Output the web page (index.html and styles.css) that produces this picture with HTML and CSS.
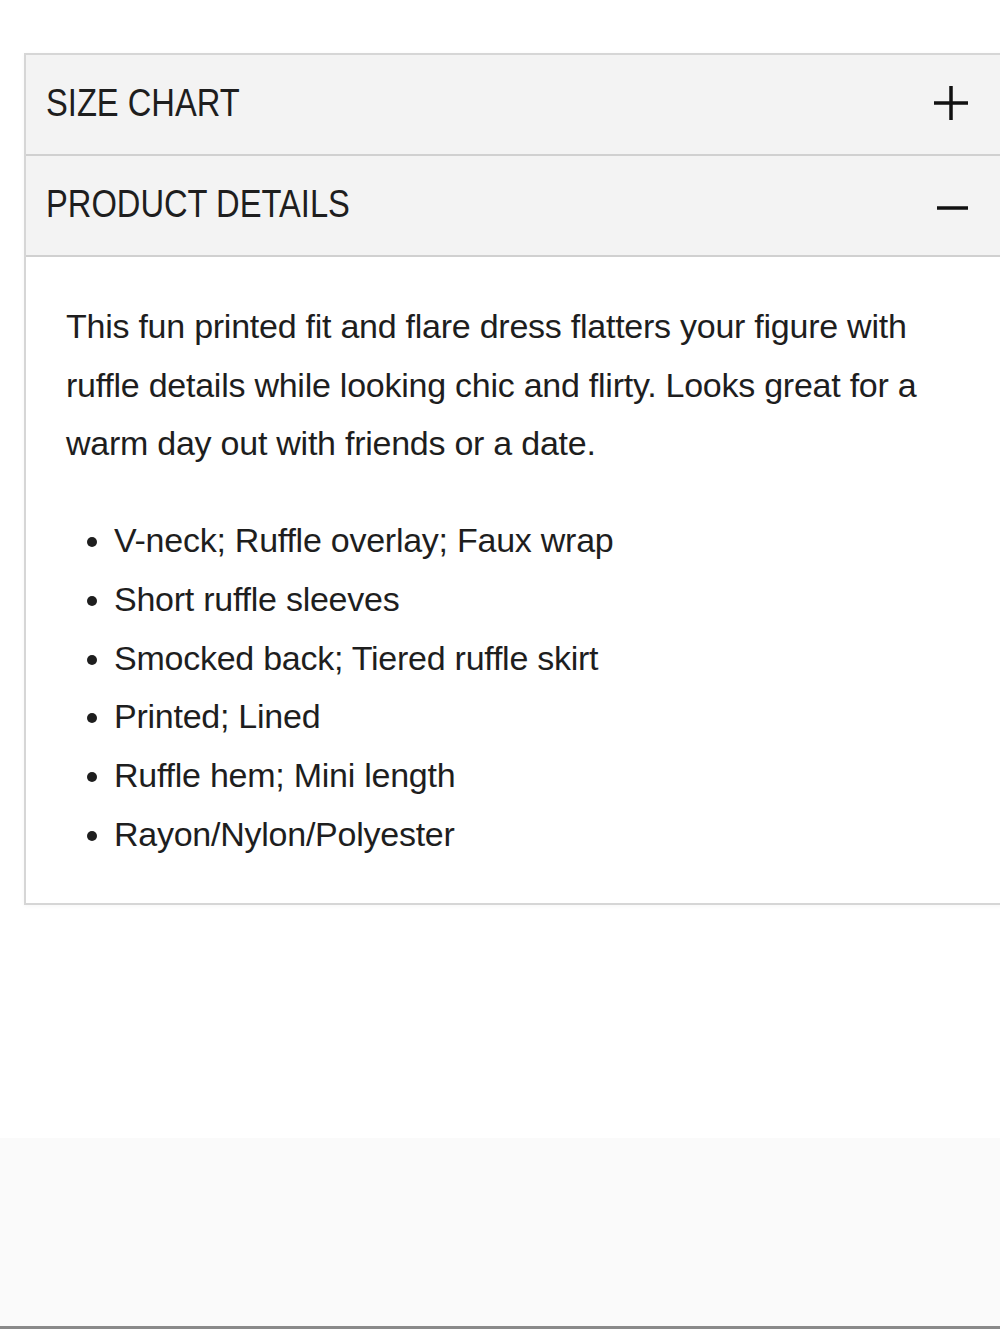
FILE: index.html
```html
<!DOCTYPE html>
<html lang="en">
<head>
    <meta charset="UTF-8">
    <meta name="viewport" content="width=device-width, initial-scale=1.0">
    <title>Product Details</title>
    <link rel="stylesheet" href="styles.css">
</head>
<body>
    <div class="page">
        <div class="accordion">
            <div class="panel-header">
                <span class="panel-title">SIZE CHART</span>
                <svg class="toggle plus" width="36" height="36" viewBox="0 0 36 36">
                    <path d="M1 18H35M18 1V35" stroke="#111" stroke-width="3.5" fill="none"/>
                </svg>
            </div>
            <div class="panel-header">
                <span class="panel-title">PRODUCT DETAILS</span>
                <svg class="toggle minus" width="36" height="36" viewBox="0 0 36 36">
                    <path d="M4 18H35" stroke="#111" stroke-width="3.5" fill="none"/>
                </svg>
            </div>
            <div class="panel-body">
                <p>This fun printed fit and flare dress flatters your figure with ruffle details while looking chic and flirty. Looks great for a warm day out with friends or a date.</p>
                <ul>
                    <li>V-neck; Ruffle overlay; Faux wrap</li>
                    <li>Short ruffle sleeves</li>
                    <li>Smocked back; Tiered ruffle skirt</li>
                    <li>Printed; Lined</li>
                    <li>Ruffle hem; Mini length</li>
                    <li>Rayon/Nylon/Polyester</li>
                </ul>
            </div>
        </div>
    </div>
    <div class="footer-bar"></div>
</body>
</html>
```

FILE: styles.css
```css
body {
    margin: 0;
    background-color: #fff;
    font-family: "Liberation Sans", Arial, sans-serif;
    color: #1e1e1e;
    overflow: hidden;
}
.page {
    height: 1138px;
    padding: 53px 0 0 24px;
    box-sizing: border-box;
}
.accordion {
    width: 1000px;
    border: 2px solid #d6d6d6;
    border-right: none;
    box-shadow: 0 1px 4px rgba(0, 0, 0, 0.04);
}
.panel-header {
    height: 99px;
    display: flex;
    align-items: center;
    justify-content: space-between;
    padding: 0 0 0 20px;
    background-color: #f3f3f3;
    border-bottom: 2px solid #d0d0d0;
}
/* narrow caps like the store's condensed heading face */
.panel-title {
    display: inline-block;
    font-size: 38px;
    margin-top: -2px;
    transform: scaleX(0.86);
    transform-origin: left center;
}
.toggle {
    margin-right: 57px;
}
.toggle.plus {
    margin-top: -4px;
}
.toggle.minus {
    margin-top: 4px;
}
.panel-body {
    padding: 40px 40px 40px 40px;
    font-size: 34px;
    line-height: 58.7px;
    letter-spacing: -0.25px;
}
.panel-body p {
    margin: 0 0 38px 0;
}
.panel-body ul {
    margin: 0;
    padding-left: 48px;
}
.footer-bar {
    height: 188px;
    background-color: #fafafa;
    border-bottom: 3px solid #8a8a8a;
}
```
